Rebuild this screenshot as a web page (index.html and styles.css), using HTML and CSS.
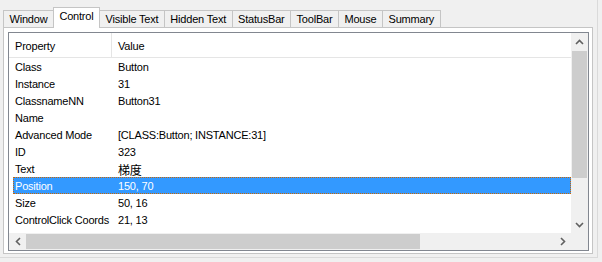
FILE: index.html
```html
<!DOCTYPE html>
<html lang="en">
<head>
  <meta charset="UTF-8"/>
  <title>Window Info – Control</title>
  <link rel="stylesheet" href="styles.css">
</head>
<body>
<div class="window">
  <div class="tabs">
    <div class="tab">Window</div>
    <div class="tab active">Control</div>
    <div class="tab">Visible Text</div>
    <div class="tab">Hidden Text</div>
    <div class="tab">StatusBar</div>
    <div class="tab">ToolBar</div>
    <div class="tab">Mouse</div>
    <div class="tab">Summary</div>
  </div>

  <div class="panel">
    <div class="list">
      <div class="content">
        <div class="head">
          <span>Property</span>
          <span>Value</span>
        </div>
        <div class="row"><span>Class</span><span>Button</span></div>
        <div class="row"><span>Instance</span><span>31</span></div>
        <div class="row"><span>ClassnameNN</span><span>Button31</span></div>
        <div class="row"><span>Name</span><span></span></div>
        <div class="row"><span>Advanced Mode</span><span>[CLASS:Button; INSTANCE:31]</span></div>
        <div class="row"><span>ID</span><span>323</span></div>
        <div class="row"><span>Text</span><span class="cjk">梯度</span></div>
        <div class="row selected"><span>Position</span><span>150, 70</span></div>
        <div class="row"><span>Size</span><span>50, 16</span></div>
        <div class="row"><span>ControlClick Coords</span><span>21, 13</span></div>
      </div>

      <!-- vertical scrollbar -->
      <div class="vscroll">
        <div class="arrow">
          <svg width="9" height="6" viewBox="0 0 9 6"><path d="M1 5 4.5 1.5 8 5" fill="none" stroke="#606060" stroke-width="1.6"/></svg>
        </div>
        <div class="vthumb"></div>
        <div class="arrow down">
          <svg width="9" height="6" viewBox="0 0 9 6"><path d="M1 1 4.5 4.5 8 1" fill="none" stroke="#606060" stroke-width="1.6"/></svg>
        </div>
      </div>

      <!-- horizontal scrollbar -->
      <div class="hscroll">
        <div class="arrow">
          <svg width="6" height="9" viewBox="0 0 6 9"><path d="M5 1 1.5 4.5 5 8" fill="none" stroke="#606060" stroke-width="1.6"/></svg>
        </div>
        <div class="hthumb"></div>
        <div class="arrow right">
          <svg width="6" height="9" viewBox="0 0 6 9"><path d="M1 1 4.5 4.5 1 8" fill="none" stroke="#606060" stroke-width="1.6"/></svg>
        </div>
      </div>
      <div class="corner"></div>
    </div>
  </div>
</div>
</body>
</html>
```

FILE: styles.css
```css
body {
    margin: 0;
    background: #f0f0f0;
    font-family: "Liberation Sans", Arial, sans-serif;
    font-size: 11px;
    letter-spacing: -0.2px;
    color: #000;
}

.window {
    width: 598px;
    height: 258px;
    box-sizing: border-box;
    border-right: 1px solid #dadada;
    border-bottom: 1px solid #dadada;
    padding: 7px 0 0 3px;
}

/* tab strip */
.tabs {
    display: flex;
    align-items: flex-start;
    height: 20px;
}

.tab {
    height: 17px;
    margin-top: 3px;
    box-sizing: border-box;
    padding: 0 5.5px;
    border: 1px solid #c5c5c5;
    border-bottom: none;
    margin-left: -1px;
    line-height: 16px;
    white-space: nowrap;
}

.tab:first-child {
    margin-left: 0;
}

.tab.active {
    height: 21px;
    margin-top: 0;
    background: #fff;
    position: relative;
    z-index: 1;
}

/* tab page */
.panel {
    width: 590px;
    height: 227px;
    box-sizing: border-box;
    border: 1px solid #c5c5c5;
    background: #fff;
    padding: 4px 3px 2px 4px;
}

.list {
    height: 219px;
    box-sizing: border-box;
    border: 1px solid #828790;
    background: #fff;
    display: grid;
    grid-template-columns: 1fr 17px;
    grid-template-rows: 1fr 17px;
}

.content {
    overflow: hidden;
}

.head {
    display: grid;
    grid-template-columns: 103px 1fr;
    height: 25px;
    box-sizing: border-box;
    border-bottom: 1px solid #e5e5e5;
    line-height: 24px;
}

.head span {
    padding-left: 6px;
    padding-top: 1px;
}

.head span:first-child {
    border-right: 1px solid #e5e5e5;
}

.row {
    display: grid;
    grid-template-columns: 99px 1fr;
    margin-left: 4px;
    height: 17px;
    white-space: nowrap;
}

.row span {
    padding-top: 2px;
    line-height: 15px;
}

.row span:first-child {
    padding-left: 2px;
}

.row span:last-child {
    padding-left: 6px;
}

.row.selected {
    background: #3399ff;
    color: #fff;
    outline: 1px dotted #cc6600;
    outline-offset: -1px;
}

.cjk {
    font-family: "Noto Sans CJK SC", "Liberation Sans", sans-serif;
    font-size: 12px;
}

/* scrollbars */
.vscroll {
    display: flex;
    flex-direction: column;
    background: #f0f0f0;
}

.hscroll {
    display: flex;
    background: #f0f0f0;
}

.arrow {
    width: 17px;
    height: 17px;
    display: flex;
    align-items: center;
    justify-content: center;
    flex-shrink: 0;
}

.vthumb {
    height: 127px;
    margin: 1px 1px 0;
    background: #cdcdcd;
}

.arrow.down {
    margin-top: auto;
}

.hthumb {
    width: 394px;
    margin: 1px 0;
    background: #cdcdcd;
}

.arrow.right {
    margin-left: auto;
}

.corner {
    background: #f0f0f0;
}
```
